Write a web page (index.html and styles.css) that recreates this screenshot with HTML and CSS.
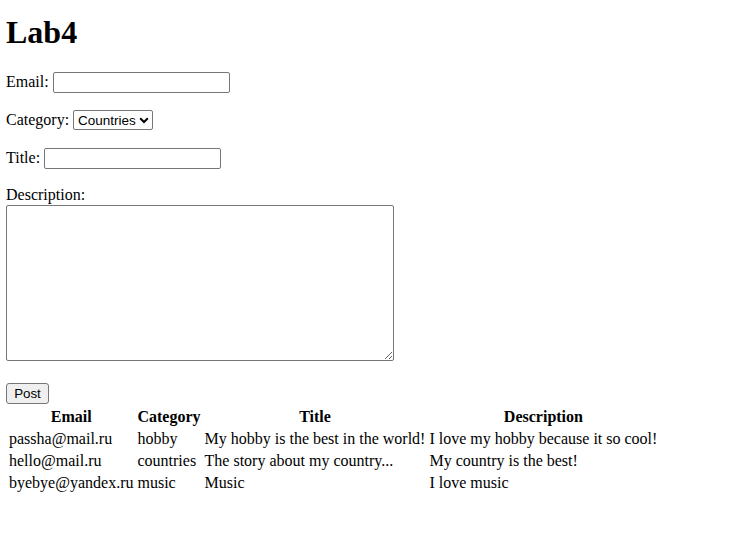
FILE: index.html
```html
<!DOCTYPE html>
<html>
<head>
<meta charset="utf-8">
<title>Lab4</title>
<link rel="stylesheet" href="styles.css">
</head>
<body>
<h1 class="title">Lab4</h1>
<form class="form">
  <p class="row">Email: <input class="text-input" type="text"></p>
  <p class="row">Category: <span class="select-wrap"><select class="select"><option>Countries</option><option>Hobby</option><option>Music</option></select><svg class="select-arrow" width="10" height="7" viewBox="0 0 10 7"><path d="M1.2 1.3 L5 5 L8.8 1.3" fill="none" stroke="#000" stroke-width="2"/></svg></span></p>
  <p class="row">Title: <input class="text-input" type="text"></p>
  <p class="desc">Description:<br><textarea class="textarea"></textarea></p>
  <div class="actions"><button class="btn" type="button">Post</button></div>
</form>
<table class="posts">
  <thead>
    <tr><th>Email</th><th>Category</th><th>Title</th><th>Description</th></tr>
  </thead>
  <tbody>
    <tr><td>passha@mail.ru</td><td>hobby</td><td>My hobby is the best in the world!</td><td>I love my hobby because it so cool!</td></tr>
    <tr><td>hello@mail.ru</td><td>countries</td><td>The story about my country...</td><td>My country is the best!</td></tr>
    <tr><td>byebye@yandex.ru</td><td>music</td><td>Music</td><td>I love music</td></tr>
  </tbody>
</table>
</body>
</html>
```
FILE: styles.css
```css
html, body {
  background: #fff;
}
body {
  margin: 0 6px;
  font-family: "Liberation Serif", "Times New Roman", serif;
  font-size: 16px;
  color: #000;
}
.title {
  font-size: 32px;
  font-weight: bold;
  margin: 14px 0 21px;
  line-height: 37px;
}
.form {
  margin: 0;
}
.row {
  margin: 0 0 16px;
  height: 22px;
  line-height: 18px;
}
.text-input {
  box-sizing: border-box;
  width: 177px;
  height: 21px;
  border: 1px solid #767676;
  border-radius: 2px;
  padding: 1px 2px;
  font-family: "Liberation Sans", Arial, sans-serif;
  font-size: 13.333px;
  vertical-align: baseline;
  margin: 0;
}
.select-wrap {
  position: relative;
  display: inline-block;
}
.select {
  box-sizing: border-box;
  width: 80px;
  height: 20px;
  border: 1px solid #767676;
  border-radius: 2px;
  background: #fff;
  -webkit-appearance: none;
  appearance: none;
  padding: 0 0 0 4px;
  font-family: "Liberation Sans", Arial, sans-serif;
  font-size: 13.5px;
  color: #000;
  margin: 0;
}
.select-arrow {
  position: absolute;
  right: 4px;
  top: 7px;
  pointer-events: none;
}
.desc {
  margin: 0 0 22px;
  line-height: 18px;
}
.textarea {
  box-sizing: border-box;
  width: 388px;
  height: 156px;
  border: 1px solid #767676;
  border-radius: 2px;
  margin: 1px 0 0;
  padding: 2px;
  font-family: "Liberation Mono", monospace;
  font-size: 13.333px;
  display: block;
}
.actions {
  display: flex;
  margin: 0;
}
.btn {
  box-sizing: border-box;
  width: 43px;
  height: 21px;
  border: 1px solid #767676;
  border-radius: 3px;
  background: #efefef;
  font-family: "Liberation Sans", Arial, sans-serif;
  font-size: 13.333px;
  padding: 0;
  color: #000;
  margin: 0;
}
.posts {
  border-collapse: separate;
  border-spacing: 2px;
  margin-top: 1px;
}
.posts th, .posts td {
  padding: 1px;
  line-height: 18px;
}
.posts th {
  font-weight: bold;
  text-align: center;
}
.posts td {
  text-align: left;
}
```
